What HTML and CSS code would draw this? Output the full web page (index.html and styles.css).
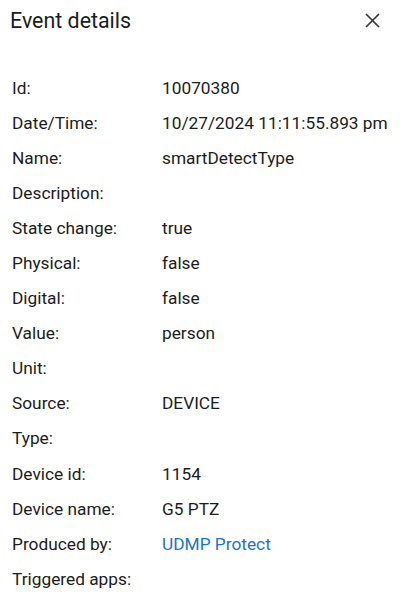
FILE: index.html
```html
<!DOCTYPE html>
<html>
<head>
<meta charset="utf-8">
<link rel="stylesheet" href="styles.css">
</head>
<body>
<div class="dialog">
  <div class="header">
    <div class="title">Event details</div>
    <button class="close" aria-label="Close">
      <svg width="15" height="15" viewBox="0 0 15 15"><path d="M1 1L14 14M14 1L1 14" stroke="#333" stroke-width="1.6" fill="none"/></svg>
    </button>
  </div>
  <div class="rows">
    <div class="row"><span class="label">Id:</span><span class="value">10070380</span></div>
    <div class="row"><span class="label">Date/Time:</span><span class="value">10/27/2024 11:11:55.893 pm</span></div>
    <div class="row"><span class="label">Name:</span><span class="value">smartDetectType</span></div>
    <div class="row"><span class="label">Description:</span><span class="value"></span></div>
    <div class="row"><span class="label">State change:</span><span class="value">true</span></div>
    <div class="row"><span class="label">Physical:</span><span class="value">false</span></div>
    <div class="row"><span class="label">Digital:</span><span class="value">false</span></div>
    <div class="row"><span class="label">Value:</span><span class="value">person</span></div>
    <div class="row"><span class="label">Unit:</span><span class="value"></span></div>
    <div class="row"><span class="label">Source:</span><span class="value">DEVICE</span></div>
    <div class="row"><span class="label">Type:</span><span class="value"></span></div>
    <div class="row"><span class="label">Device id:</span><span class="value">1154</span></div>
    <div class="row"><span class="label">Device name:</span><span class="value">G5 PTZ</span></div>
    <div class="row"><span class="label">Produced by:</span><a class="value link" href="#">UDMP Protect</a></div>
    <div class="row"><span class="label">Triggered apps:</span><span class="value"></span></div>
  </div>
</div>
</body>
</html>
```

FILE: styles.css
```css
html, body {
  margin: 0;
  padding: 0;
  background: #fff;
}
body {
  font-family: Roboto, "Noto Sans", sans-serif;
  color: #1c1c1c;
}
.dialog {
  width: 403px;
}
.header {
  display: flex;
  align-items: center;
  justify-content: space-between;
  height: 40px;
  padding: 0 23px 0 10px;
}
.title {
  font-size: 21.4px;
  font-weight: 400;
}
.close {
  border: 0;
  background: none;
  padding: 0;
  width: 16px;
  height: 16px;
  display: flex;
  align-items: center;
  justify-content: center;
  cursor: pointer;
}
.rows {
  padding: 30px 12px 0 12px;
  display: flex;
  flex-direction: column;
}
.row {
  display: flex;
  height: 35.1px;
  align-items: center;
  font-size: 17.3px;
}
.label {
  width: 150px;
  flex: none;
}
.value {
  color: #1c1c1c;
}
.link {
  color: #1a73d2;
  text-decoration: none;
}
```
